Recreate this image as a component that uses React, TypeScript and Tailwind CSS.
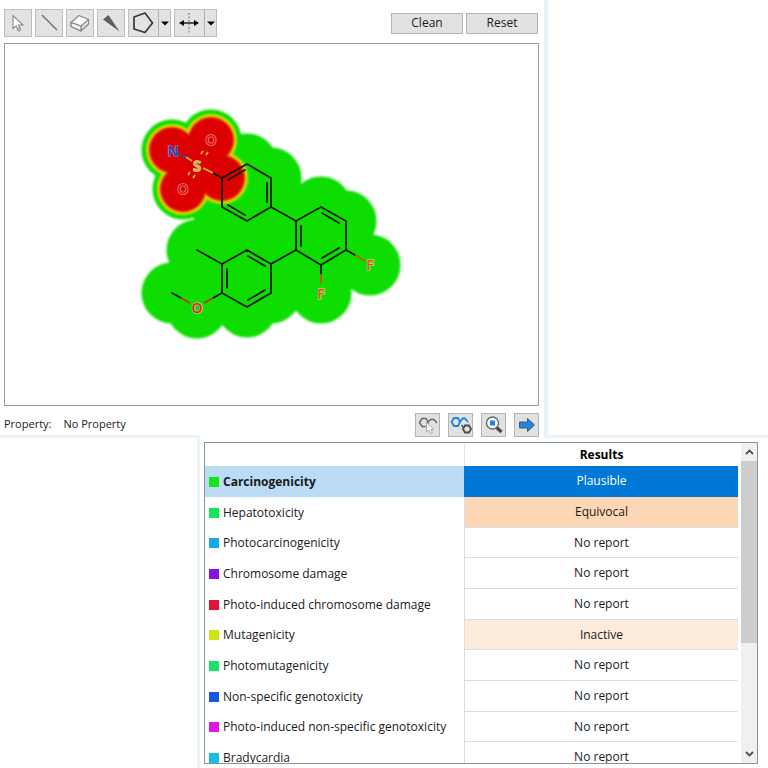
import type { ReactNode } from "react";

type Point = [number, number];

const endpoints = [
  { name: "Carcinogenicity", color: "#16e416", result: "Plausible" },
  { name: "Hepatotoxicity", color: "#16e45c", result: "Equivocal" },
  { name: "Photocarcinogenicity", color: "#16a9e4", result: "No report" },
  { name: "Chromosome damage", color: "#8612e8", result: "No report" },
  { name: "Photo-induced chromosome damage", color: "#e41236", result: "No report" },
  { name: "Mutagenicity", color: "#cfe416", result: "Inactive" },
  { name: "Photomutagenicity", color: "#16e466", result: "No report" },
  { name: "Non-specific genotoxicity", color: "#1656e4", result: "No report" },
  { name: "Photo-induced non-specific genotoxicity", color: "#e016e4", result: "No report" },
  { name: "Bradycardia", color: "#16bfe4", result: "No report" },
];

const resultStyles: Record<string, string> = {
  Plausible: "bg-[#0078d7] text-white border-[#0078d7]",
  Equivocal: "bg-[#fdd7b5] border-[#dcdcdc]",
  Inactive: "bg-[#fdebdc] border-[#dcdcdc]",
  "No report": "border-[#dcdcdc]",
};

// atoms that only add to the green area
const neutralAtoms: Point[] = [
  [247, 164], [271, 178], [271, 207], [247, 221], [222, 207],
  [296, 221], [321, 207], [346, 221], [346, 250], [321, 265], [296, 250],
  [271, 264], [271, 293], [247, 307], [222, 293], [222, 264], [247, 250],
  [197, 250], [197, 308], [172, 293], [370, 265], [321, 293],
];

// atoms of the alerting sulfonamide
const alertAtoms: Point[] = [[172, 150], [211, 140], [183, 189], [197, 165], [222, 178]];

function Circles({ points, r, fill, blur }: { points: Point[]; r: number; fill: string; blur: string }) {
  return (
    <g fill={fill} filter={`url(#${blur})`}>
      {points.map(([x, y]) => (
        <circle key={`${x}-${y}`} cx={x} cy={y} r={r} />
      ))}
    </g>
  );
}

function Atom({ x, y, color, halo, children }: { x: number; y: number; color: string; halo: string; children: string }) {
  return (
    <text
      x={x}
      y={y}
      fill={color}
      stroke={halo}
      strokeWidth="1.6"
      paintOrder="stroke"
      textAnchor="middle"
      fontSize="14"
      fontWeight="600"
    >
      {children}
    </text>
  );
}

function Molecule() {
  return (
    <svg viewBox="5 44 533 361" className="block w-full" role="img" aria-label="Molecule with alert map">
      <defs>
        <filter id="soft" x="-10%" y="-10%" width="120%" height="120%">
          <feGaussianBlur stdDeviation="1.3" />
        </filter>
        <filter id="fine" x="-10%" y="-10%" width="120%" height="120%">
          <feGaussianBlur stdDeviation="0.8" />
        </filter>
      </defs>
      <Circles points={neutralAtoms} r={30.5} fill="#08dd00" blur="soft" />
      <Circles points={alertAtoms} r={30.5} fill="#08dd00" blur="soft" />
      <Circles points={alertAtoms} r={26} fill="#d8e000" blur="fine" />
      <Circles points={alertAtoms} r={23.5} fill="#f09000" blur="fine" />
      <Circles points={alertAtoms} r={22.5} fill="#dd0000" blur="fine" />

      <g fill="none" stroke="#0a1a05" strokeWidth="1.8" strokeLinecap="round" strokeLinejoin="round">
        <path d="M222 178L247 164L271 178V207L247 221L222 207Z" />
        <path d="M228 180L245 170M267 183V202M228 205L245 215" />
        <path d="M296 221L321 207L346 221V250L321 265L296 250Z" />
        <path d="M322 213L339 223M301 226V246M322 258L339 248" />
        <path d="M271 264V293L247 307L222 293V264L247 250Z" />
        <path d="M248 256L265 266M227 269V288M248 300L265 290" />
        <path d="M271 207L296 221M296 250L271 264M222 264L197 250" />
        <path d="M222 178L213 173M222 293L213 298M172 293L181 298M321 265V274M346 250L355 255" />
      </g>
      <g fill="none" strokeWidth="1.8">
        <path d="M213 298L204 303M181 298L190 303" stroke="#d02a10" />
        <path d="M321 274V284M355 255L365 261" stroke="#c05a10" />
        <path d="M213 173L203 168M192 161L186 157" stroke="#d2b030" />
        <path d="M186 157L179 154" stroke="#3040c8" />
        <path d="M201 154L203 151M206 155L208 152M188 175L190 172M193 178L195 175" stroke="#e0c020" />
      </g>

      <g fontFamily="'Open Sans', 'Noto Sans', sans-serif">
        <Atom x={173} y={156} color="#2440c0" halo="#a87098">N</Atom>
        <Atom x={197} y={171} color="#c8b43c" halo="#e8c890">S</Atom>
        <Atom x={211} y={145} color="#dd1010" halo="#ec8080">O</Atom>
        <Atom x={183} y={194} color="#dd1010" halo="#ec8080">O</Atom>
        <Atom x={197} y={313} color="#e02020" halo="#c8c890">O</Atom>
        <Atom x={370} y={270} color="#cc6010" halo="#c8c880">F</Atom>
        <Atom x={321} y={299} color="#cc6010" halo="#c8c880">F</Atom>
      </g>
    </svg>
  );
}

function ToolButton({ label, children }: { label: string; children: ReactNode }) {
  return (
    <button aria-label={label} className="flex size-7 items-center justify-center border border-[#bdbdbd] bg-[#e3e3e3]">
      {children}
    </button>
  );
}

function SplitButton({ label, children }: { label: string; children: ReactNode }) {
  return (
    <div className="flex h-7 w-[43px] border border-[#bdbdbd] bg-[#e3e3e3]">
      <button aria-label={label} className="flex flex-1 items-center justify-center">
        {children}
      </button>
      <button aria-label={`${label} options`} className="flex w-3 items-center justify-center border-l border-[#b0b0b0]">
        <svg width="8" height="5" viewBox="0 0 8 5">
          <path d="M0 0.5H8L4 4.5Z" fill="#000" />
        </svg>
      </button>
    </div>
  );
}

function TextButton({ children }: { children: string }) {
  return (
    <button className="h-[21px] w-[72px] border border-[#b4b4b4] bg-[#e1e1e1] text-center leading-[18px]">{children}</button>
  );
}

function ActionButton({ label, children }: { label: string; children: ReactNode }) {
  return (
    <button aria-label={label} className="flex h-6 w-[25px] items-center justify-center border border-[#b4b4b4] bg-[#e1e1e1]">
      {children}
    </button>
  );
}

function Toolbar() {
  return (
    <div className="flex h-7 items-center justify-between pr-px">
      <div className="flex gap-[3px]">
        <ToolButton label="Select">
          <svg width="20" height="20" viewBox="0 0 20 20">
            <path d="M5 2.5V15.5L8.2 12.8L10.3 17.3L12.5 16.3L10.5 12H15Z" fill="#fff" stroke="#8a8a8a" strokeWidth="1.1" />
            <circle cx="11" cy="16.5" r="1.6" fill="#ccc" stroke="#8a8a8a" />
          </svg>
        </ToolButton>
        <ToolButton label="Bond">
          <svg width="20" height="20" viewBox="0 0 20 20">
            <path d="M3 2L18 17" stroke="#757575" strokeWidth="1.5" />
          </svg>
        </ToolButton>
        <ToolButton label="Erase">
          <svg width="22" height="20" viewBox="0 0 22 20">
            <path d="M2 9.5L10 2.5L19.5 6.5L12 13Z" fill="#fff" stroke="#858585" strokeWidth="1.1" strokeLinejoin="round" />
            <path d="M2 9.5V13.5L12 18V13M12 18L19.5 11V6.5" fill="#e9e9e9" stroke="#858585" strokeWidth="1.1" strokeLinejoin="round" />
            <path d="M2 9.5L12 13V18L2 13.5Z" fill="#f0f0f0" stroke="#858585" strokeWidth="1.1" strokeLinejoin="round" />
          </svg>
        </ToolButton>
        <ToolButton label="Stereo bond">
          <svg width="20" height="20" viewBox="0 0 20 20">
            <path d="M7.5 2L2 6.5L18.5 18.5Z" fill="#606060" />
          </svg>
        </ToolButton>
        <SplitButton label="Ring">
          <svg width="24" height="22" viewBox="0 0 24 22">
            <path d="M2 5L13 1L20.5 11L13 20.5L2 17Z" fill="none" stroke="#383838" strokeWidth="1.7" strokeLinejoin="round" />
          </svg>
        </SplitButton>
        <SplitButton label="Flip">
          <svg width="22" height="22" viewBox="0 0 22 22">
            <path d="M10 1V21" stroke="#777" strokeDasharray="2 1.5" />
            <path d="M2 11H18" stroke="#000" strokeWidth="1.3" />
            <path d="M0 11L5 8V14ZM20 11L15 8V14Z" fill="#000" />
          </svg>
        </SplitButton>
      </div>
      <div className="flex gap-[3px]">
        <TextButton>Clean</TextButton>
        <TextButton>Reset</TextButton>
      </div>
    </div>
  );
}

function PropertyBar() {
  return (
    <div className="mt-[7px] flex h-[22px] justify-between">
      <div className="flex h-[22px] items-center gap-3 text-[11px] leading-4">
        <span>Property:</span>
        <span>No Property</span>
      </div>
      <div className="flex gap-2">
        <ActionButton label="Pick structure">
          <svg width="22" height="20" viewBox="0 0 22 20">
            <path d="M11 7L9 3.5H5L2.5 7.5L5 11.5H8.5M11 7L13.5 4.5H17L20 8M11 7V9" fill="none" stroke="#6a6a6a" strokeWidth="1.5" />
            <path d="M9.5 7.5V17L12 15L13.5 18.5L15.5 17.5L14 14.5H17Z" fill="#fff" stroke="#999" strokeWidth="0.8" />
          </svg>
        </ActionButton>
        <ActionButton label="Link structures">
          <svg width="22" height="20" viewBox="0 0 22 20">
            <path d="M10 7L8 3H4L1.5 7L4 11H8L10 7L12.5 3.5H15L18 7" fill="none" stroke="#1e86e0" strokeWidth="1.8" />
            <path d="M11.5 10L14 13" stroke="#555" strokeWidth="1.5" />
            <path d="M15 10.5H19L21 14L19 17.5H15L13 14Z" fill="none" stroke="#4a4a4a" strokeWidth="1.8" />
          </svg>
        </ActionButton>
        <ActionButton label="Inspect">
          <svg width="20" height="20" viewBox="0 0 20 20">
            <path d="M12.5 12.5L17.5 17" stroke="#4a4a4a" strokeWidth="3.4" />
            <circle cx="8.5" cy="8" r="6" fill="#fff" stroke="#6a6a6a" strokeWidth="1.4" />
            <rect x="6" y="5.5" width="5" height="5" fill="#1e86e0" />
          </svg>
        </ActionButton>
        <ActionButton label="Next">
          <svg width="18" height="16" viewBox="0 0 18 16">
            <path d="M1.5 5H9.5V1.5L16.5 8L9.5 14.5V11H1.5Z" fill="#1e86e0" stroke="#4a5a6a" strokeWidth="1" />
          </svg>
        </ActionButton>
      </div>
    </div>
  );
}

function ResultsTable() {
  return (
    <table className="w-full table-fixed border-separate border-spacing-0">
      <thead>
        <tr className="h-[23px]">
          <th className="w-[259px]" aria-label="Endpoint" />
          <th className="border-l border-[#e4e4e4] p-0 text-center leading-4 font-bold text-black">Results</th>
        </tr>
      </thead>
      <tbody>
        {endpoints.map((e, i) => (
          <tr key={e.name} className="h-[31px] [&:nth-child(3n)]:h-[30px]">
            <th scope="row" className={`p-0 text-left leading-4 ${i === 0 ? "bg-[#bbdcf4] font-bold" : "font-normal"}`}>
              <div className="flex items-center gap-1 pl-1 whitespace-nowrap">
                <span className="size-[10px]" style={{ background: e.color }} />
                {e.name}
              </div>
            </th>
            <td className={`border-b border-l p-0 text-center leading-4 ${resultStyles[e.result]}`}>{e.result}</td>
          </tr>
        ))}
      </tbody>
    </table>
  );
}

function Scrollbar() {
  return (
    <div className="ml-[3px] flex w-4 flex-col bg-[#f0f0f0]">
      <button aria-label="Scroll up" className="flex h-[18px] items-center justify-center">
        <svg width="9" height="6" viewBox="0 0 9 6">
          <path d="M1 5L4.5 1.5L8 5" fill="none" stroke="#505050" strokeWidth="1.8" />
        </svg>
      </button>
      <div className="flex-1">
        <div className="h-[64%] bg-[#cdcdcd]" />
      </div>
      <button aria-label="Scroll down" className="flex h-[18px] items-center justify-center">
        <svg width="9" height="6" viewBox="0 0 9 6">
          <path d="M1 1L4.5 4.5L8 1" fill="none" stroke="#505050" strokeWidth="1.8" />
        </svg>
      </button>
    </div>
  );
}

export default function App() {
  return (
    <div className="flex h-screen flex-col bg-white font-['Open_Sans','Noto_Sans',sans-serif] text-[12px] text-[#1a1a1a]">
      <div className="flex">
        {/* structure editor */}
        <div className="min-w-0 flex-1">
          <div className="pt-[9px] pr-[5px] pl-1">
            <Toolbar />
            <div className="mt-[6px] border border-[#9a9ba3]">
              <Molecule />
            </div>
            <PropertyBar />
          </div>
          <div className="h-[3px] w-[200px] bg-[#eaf4f8]" />
        </div>
        <div className="w-56 border-b-[3px] border-l-4 border-[#eaf4f8]" />
      </div>

      <div className="flex min-h-0 flex-1">
        <div className="w-[200px] border-r-[3px] border-[#eaf4f8]" />
        {/* endpoint results */}
        <div className="mt-1 mr-[10px] mb-1 ml-1 flex min-w-0 flex-1 overflow-hidden border border-[#8f9099]">
          <div className="min-w-0 flex-1 overflow-hidden">
            <ResultsTable />
          </div>
          <Scrollbar />
        </div>
      </div>
    </div>
  );
}
